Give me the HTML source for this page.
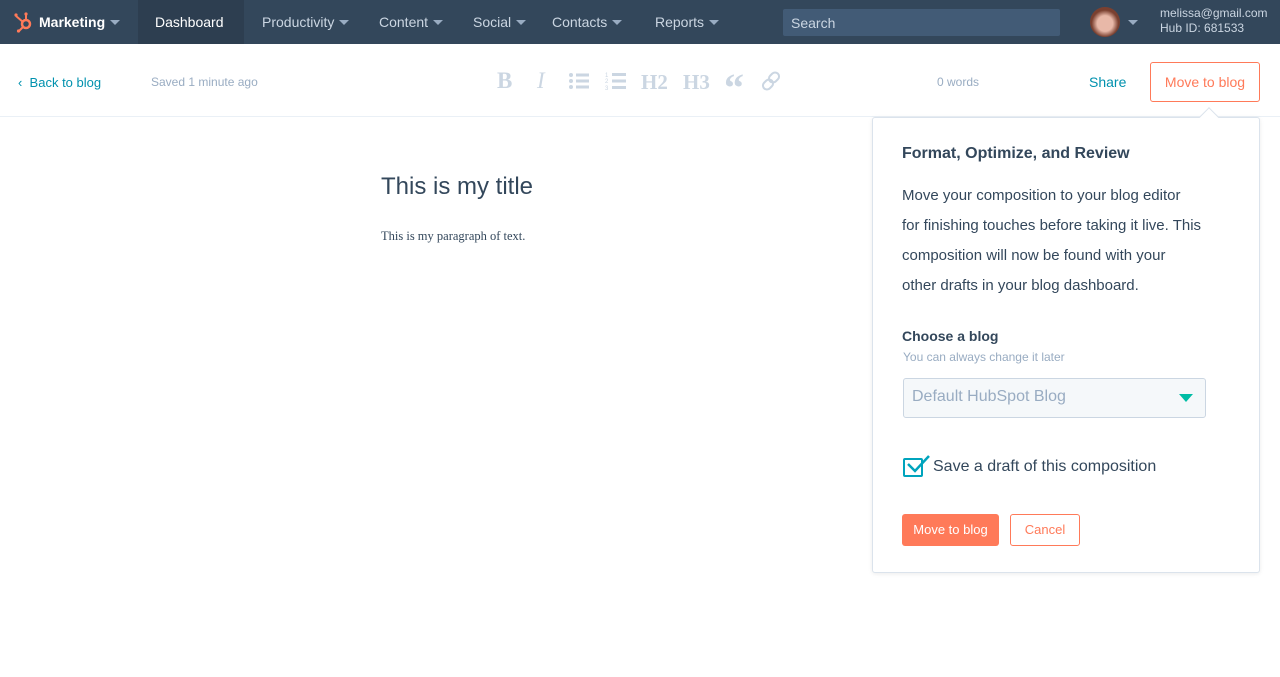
<!DOCTYPE html>
<html><head><style>
*{box-sizing:border-box;margin:0;padding:0}
body{width:1280px;height:677px;overflow:hidden;background:#fff;font-family:"Liberation Sans",sans-serif;position:relative}
.nav{position:absolute;left:0;top:0;width:1280px;height:44px;background:#33475b;color:#cbd6e2;font-size:14px}
.nav span{position:absolute;top:14px}
.car{display:inline-block;width:0;height:0;border-left:5px solid transparent;border-right:5px solid transparent;border-top:5px solid #99acc2;margin-left:5px;vertical-align:2px}
.abs{position:absolute}
</style></head><body>
<div class="nav">
<svg class="abs" style="left:13px;top:11px" width="22" height="22" viewBox="0 0 22 22"><circle cx="13" cy="13" r="4" fill="none" stroke="#ff7a59" stroke-width="2.5"/><line x1="13" y1="9" x2="13" y2="3" stroke="#ff7a59" stroke-width="2"/><circle cx="13" cy="3" r="1.6" fill="#ff7a59"/><line x1="10" y1="11" x2="3" y2="5" stroke="#ff7a59" stroke-width="2"/><circle cx="3" cy="4" r="1.6" fill="#ff7a59"/><line x1="10" y1="16" x2="6" y2="20" stroke="#ff7a59" stroke-width="2"/><circle cx="5.5" cy="20" r="1.6" fill="#ff7a59"/></svg>
<span style="left:39px;color:#fff;font-weight:bold">Marketing<i class="car"></i></span>
<div class="abs" style="left:138px;top:0;width:106px;height:44px;background:#2d3e50"></div>
<span style="left:155px;color:#fff">Dashboard</span>
<span style="left:262px">Productivity<i class="car"></i></span>
<span style="left:379px">Content<i class="car"></i></span>
<span style="left:473px">Social<i class="car"></i></span>
<span style="left:552px">Contacts<i class="car"></i></span>
<span style="left:655px">Reports<i class="car"></i></span>
<div class="abs" style="left:783px;top:9px;width:277px;height:27px;background:#425b76;border-radius:2px;color:#cbd6e2;font-size:14px;padding:6px 8px">Search</div>
<div class="abs" style="left:1090px;top:7px;width:30px;height:30px;border-radius:50%;background:radial-gradient(circle at 50% 55%,#e8b8a8 35%,#7a4030 60%)"></div>
<i class="car abs" style="left:1123px;top:20px"></i>
<div class="abs" style="left:1160px;top:6px;font-size:12px;line-height:15px;color:#cbd6e2">melissa@gmail.com<br>Hub ID: 681533</div>
</div>
<div class="abs" style="left:0;top:116px;width:1280px;height:1px;background:#eaf0f6"></div>
<div class="abs" style="left:18px;top:75px;font-size:13px;color:#0091ae">‹&nbsp; Back to blog</div>
<div class="abs" style="left:151px;top:75px;font-size:12px;color:#99acc2">Saved 1 minute ago</div>
<div class="abs" style="left:497px;top:68px;font-family:'Liberation Serif',serif;font-size:23px;color:#cbd6e2;font-weight:bold">B</div>
<div class="abs" style="left:537px;top:68px;font-family:'Liberation Serif',serif;font-size:23px;color:#cbd6e2;font-style:italic">I</div>
<svg class="abs" style="left:568px;top:72px" width="22" height="18"><g fill="#cbd6e2"><circle cx="3" cy="3" r="2"/><circle cx="3" cy="9" r="2"/><circle cx="3" cy="15" r="2"/><rect x="8" y="1.5" width="13" height="3"/><rect x="8" y="7.5" width="13" height="3"/><rect x="8" y="13.5" width="13" height="3"/></g></svg>
<svg class="abs" style="left:605px;top:71px" width="22" height="20"><g fill="#cbd6e2"><text x="0" y="6" font-size="6">1</text><text x="0" y="12" font-size="6">2</text><text x="0" y="19" font-size="6">3</text><rect x="7" y="2" width="14" height="3"/><rect x="7" y="8.5" width="14" height="3"/><rect x="7" y="15" width="14" height="3"/></g></svg>
<div class="abs" style="left:641px;top:70px;font-family:'Liberation Serif',serif;font-size:21px;color:#cbd6e2;font-weight:bold">H2</div>
<div class="abs" style="left:683px;top:70px;font-family:'Liberation Serif',serif;font-size:21px;color:#cbd6e2;font-weight:bold">H3</div>
<div class="abs" style="left:724px;top:64px;font-family:'Liberation Serif',serif;font-size:40px;color:#cbd6e2;font-weight:bold">“</div>
<svg class="abs" style="left:761px;top:71px" width="21" height="21"><g fill="none" stroke="#cbd6e2" stroke-width="2"><rect x="9" y="1" width="8" height="11" rx="4" transform="rotate(45 13 6.5)"/><rect x="3" y="8" width="8" height="11" rx="4" transform="rotate(45 7 13.5)"/></g></svg>
<div class="abs" style="left:937px;top:75px;font-size:12px;color:#99acc2">0 words</div>
<div class="abs" style="left:1089px;top:74px;font-size:14px;color:#0091ae">Share</div>
<div class="abs" style="left:1150px;top:62px;width:110px;height:40px;border:1px solid #ff7a59;border-radius:3px;color:#ff7a59;font-size:14px;text-align:center;line-height:38px">Move to blog</div>
<div class="abs" style="left:381px;top:173px;font-size:24px;color:#33475b">This is my title</div>
<div class="abs" style="left:381px;top:229px;font-family:'Liberation Serif',serif;font-size:12.5px;color:#33475b">This is my paragraph of text.</div>
<div class="abs" style="left:872px;top:117px;width:388px;height:456px;border:1px solid #dbe3ec;border-radius:3px;background:#fff;box-shadow:0 1px 4px rgba(0,0,0,.08)"></div>
<div class="abs" style="left:1202px;top:110px;width:14px;height:14px;background:#fff;border-left:1px solid #dbe3ec;border-top:1px solid #dbe3ec;transform:rotate(45deg)"></div>
<div class="abs" style="left:902px;top:145px;font-size:16px;font-weight:bold;color:#33475b">Format, Optimize, and Review</div>
<div class="abs" style="left:902px;top:181px;white-space:nowrap;font-size:15px;line-height:30px;color:#33475b">Move your composition to your blog editor<br>for finishing touches before taking it live. This<br>composition will now be found with your<br>other drafts in your blog dashboard.</div>
<div class="abs" style="left:902px;top:328px;font-size:14px;font-weight:bold;color:#33475b">Choose a blog</div>
<div class="abs" style="left:903px;top:350px;font-size:12px;color:#99acc2">You can always change it later</div>
<div class="abs" style="left:903px;top:378px;width:303px;height:40px;border:1px solid #cbd6e2;border-radius:3px;background:#f5f8fa;color:#99acc2;font-size:16px;padding:9px 8px">Default HubSpot Blog</div>
<div class="abs" style="left:1179px;top:394px;border-left:7px solid transparent;border-right:7px solid transparent;border-top:8px solid #00bda5"></div>
<div class="abs" style="left:903px;top:458px;width:20px;height:19px;border:2px solid #00a4bd;border-radius:2px"></div>
<svg class="abs" style="left:905px;top:454px" width="26" height="20"><path d="M3 10 L10 17 L24 2" fill="none" stroke="#00a4bd" stroke-width="2.5"/></svg>
<div class="abs" style="left:933px;top:458px;font-size:16px;color:#33475b">Save a draft of this composition</div>
<div class="abs" style="left:902px;top:514px;width:97px;height:32px;background:#ff7a59;border-radius:3px;color:#fff;font-size:13px;text-align:center;line-height:31px">Move to blog</div>
<div class="abs" style="left:1010px;top:514px;width:70px;height:32px;border:1px solid #ff7a59;border-radius:3px;color:#ff7a59;font-size:13px;text-align:center;line-height:30px">Cancel</div>
</body></html>
